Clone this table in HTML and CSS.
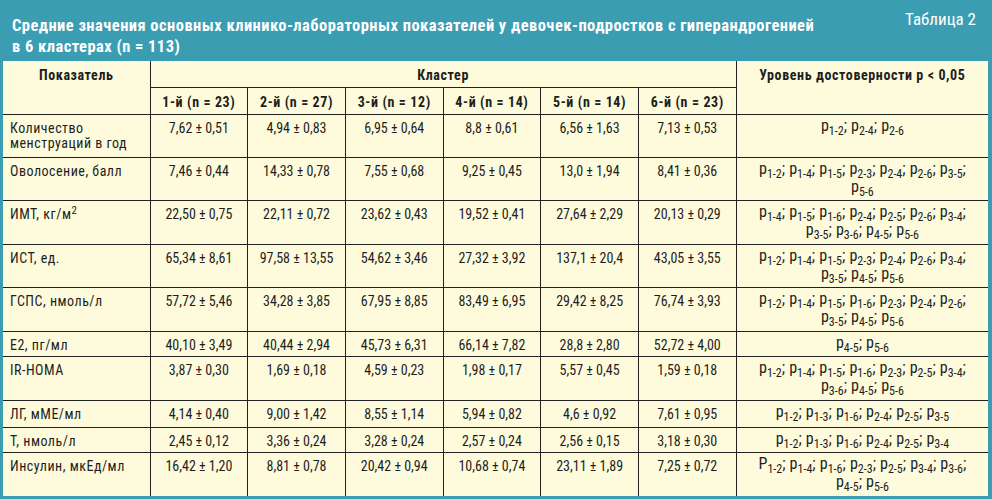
FILE: index.html
```html
<!DOCTYPE html>
<html lang="ru">
<head>
<meta charset="utf-8">
<title>Таблица 2</title>
<link rel="stylesheet" href="styles.css">
</head>
<body>
<div class="frame">
  <div class="title-bar">
    <h1 class="title">Средние значения основных клинико-лабораторных показателей у девочек-подростков с гиперандрогенией<br>в 6 кластерах (n = 113)</h1>
    <div class="label">Таблица 2</div>
  </div>
  <table class="data">
    <colgroup>
      <col class="col-name">
      <col class="col-val"><col class="col-val"><col class="col-val">
      <col class="col-val"><col class="col-val"><col class="col-val">
      <col class="col-p">
    </colgroup>
    <thead>
      <tr class="hr-a">
        <th rowspan="2" class="th-name">Показатель</th>
        <th colspan="6" class="th-cluster">Кластер</th>
        <th rowspan="2" class="th-p">Уровень достоверности р &lt; 0,05</th>
      </tr>
      <tr class="hr-b">
        <th>1-й (n = 23)</th>
        <th>2-й (n = 27)</th>
        <th>3-й (n = 12)</th>
        <th>4-й (n = 14)</th>
        <th>5-й (n = 14)</th>
        <th>6-й (n = 23)</th>
      </tr>
    </thead>
    <tbody>
      <tr class="r43">
        <td class="name">Количество<br>менструаций в год</td>
        <td>7,62 ± 0,51</td><td>4,94 ± 0,83</td><td>6,95 ± 0,64</td><td>8,8 ± 0,61</td><td>6,56 ± 1,63</td><td>7,13 ± 0,53</td>
        <td class="pv">р<sub>1-2</sub>; р<sub>2-4</sub>; р<sub>2-6</sub></td>
      </tr>
      <tr class="r43">
        <td class="name">Оволосение, балл</td>
        <td>7,46 ± 0,44</td><td>14,33 ± 0,78</td><td>7,55 ± 0,68</td><td>9,25 ± 0,45</td><td>13,0 ± 1,94</td><td>8,41 ± 0,36</td>
        <td class="pv">р<sub>1-2</sub>; р<sub>1-4</sub>; р<sub>1-5</sub>; р<sub>2-3</sub>; р<sub>2-4</sub>; р<sub>2-6</sub>; р<sub>3-5</sub>;<br>р<sub>5-6</sub></td>
      </tr>
      <tr class="r44">
        <td class="name">ИМТ, кг/м<sup>2</sup></td>
        <td>22,50 ± 0,75</td><td>22,11 ± 0,72</td><td>23,62 ± 0,43</td><td>19,52 ± 0,41</td><td>27,64 ± 2,29</td><td>20,13 ± 0,29</td>
        <td class="pv">р<sub>1-4</sub>; р<sub>1-5</sub>; р<sub>1-6</sub>; р<sub>2-4</sub>; р<sub>2-5</sub>; р<sub>2-6</sub>; р<sub>3-4</sub>;<br>р<sub>3-5</sub>; р<sub>3-6</sub>; р<sub>4-5</sub>; р<sub>5-6</sub></td>
      </tr>
      <tr class="r43">
        <td class="name">ИСТ, ед.</td>
        <td>65,34 ± 8,61</td><td>97,58 ± 13,55</td><td>54,62 ± 3,46</td><td>27,32 ± 3,92</td><td>137,1 ± 20,4</td><td>43,05 ± 3,55</td>
        <td class="pv">р<sub>1-2</sub>; р<sub>1-4</sub>; р<sub>1-5</sub>; р<sub>2-3</sub>; р<sub>2-4</sub>; р<sub>2-6</sub>; р<sub>3-4</sub>;<br>р<sub>3-5</sub>; р<sub>4-5</sub>; р<sub>5-6</sub></td>
      </tr>
      <tr class="r44">
        <td class="name">ГСПС, нмоль/л</td>
        <td>57,72 ± 5,46</td><td>34,28 ± 3,85</td><td>67,95 ± 8,85</td><td>83,49 ± 6,95</td><td>29,42 ± 8,25</td><td>76,74 ± 3,93</td>
        <td class="pv">р<sub>1-2</sub>; р<sub>1-4</sub>; р<sub>1-5</sub>; р<sub>1-6</sub>; р<sub>2-3</sub>; р<sub>2-4</sub>; р<sub>2-6</sub>;<br>р<sub>3-5</sub>; р<sub>4-5</sub>; р<sub>5-6</sub></td>
      </tr>
      <tr class="r25">
        <td class="name">Е2, пг/мл</td>
        <td>40,10 ± 3,49</td><td>40,44 ± 2,94</td><td>45,73 ± 6,31</td><td>66,14 ± 7,82</td><td>28,8 ± 2,80</td><td>52,72 ± 4,00</td>
        <td class="pv">р<sub>4-5</sub>; р<sub>5-6</sub></td>
      </tr>
      <tr class="r44">
        <td class="name">IR-HOMA</td>
        <td>3,87 ± 0,30</td><td>1,69 ± 0,18</td><td>4,59 ± 0,23</td><td>1,98 ± 0,17</td><td>5,57 ± 0,45</td><td>1,59 ± 0,18</td>
        <td class="pv">р<sub>1-2</sub>; р<sub>1-4</sub>; р<sub>1-5</sub>; р<sub>1-6</sub>; р<sub>2-3</sub>; р<sub>2-5</sub>; р<sub>3-4</sub>;<br>р<sub>3-6</sub>; р<sub>4-5</sub>; р<sub>5-6</sub></td>
      </tr>
      <tr class="r27">
        <td class="name">ЛГ, мМЕ/мл</td>
        <td>4,14 ± 0,40</td><td>9,00 ± 1,42</td><td>8,55 ± 1,14</td><td>5,94 ± 0,82</td><td>4,6 ± 0,92</td><td>7,61 ± 0,95</td>
        <td class="pv">р<sub>1-2</sub>; р<sub>1-3</sub>; р<sub>1-6</sub>; р<sub>2-4</sub>; р<sub>2-5</sub>; р<sub>3-5</sub></td>
      </tr>
      <tr class="r25">
        <td class="name">Т, нмоль/л</td>
        <td>2,45 ± 0,12</td><td>3,36 ± 0,24</td><td>3,28 ± 0,24</td><td>2,57 ± 0,24</td><td>2,56 ± 0,15</td><td>3,18 ± 0,30</td>
        <td class="pv">р<sub>1-2</sub>; р<sub>1-3</sub>; р<sub>1-6</sub>; р<sub>2-4</sub>; р<sub>2-5</sub>; р<sub>3-4</sub></td>
      </tr>
      <tr class="r44 last">
        <td class="name">Инсулин, мкЕд/мл</td>
        <td>16,42 ± 1,20</td><td>8,81 ± 0,78</td><td>20,42 ± 0,94</td><td>10,68 ± 0,74</td><td>23,11 ± 1,89</td><td>7,25 ± 0,72</td>
        <td class="pv">Р<sub>1-2</sub>; р<sub>1-4</sub>; р<sub>1-6</sub>; р<sub>2-3</sub>; р<sub>2-5</sub>; р<sub>3-4</sub>; р<sub>3-6</sub>;<br>р<sub>4-5</sub>; р<sub>5-6</sub></td>
      </tr>
    </tbody>
  </table>
</div>
</body>
</html>
```

FILE: styles.css
```css
* { box-sizing: border-box; }

html, body {
  margin: 0;
  padding: 0;
  background: #3a9db2;
}

body {
  font-family: "Liberation Sans Narrow", "Roboto Condensed", "DejaVu Sans Condensed", Roboto, sans-serif;
  color: #1e1e1e;
}

.frame {
  width: 992px;
  height: 499px;
  background: #3a9db2;
  padding: 0 4px 3px 3px;
  display: flex;
  flex-direction: column;
}

.title-bar {
  height: 62px;
  display: flex;
  justify-content: space-between;
  align-items: flex-start;
  padding: 15px 12px 0 9px;
  color: #ffffff;
}

.title {
  margin: 0;
  font-size: 16.5px;
  line-height: 21px;
  letter-spacing: 0.45px;
  font-weight: bold;
}

.label {
  font-size: 17px;
  line-height: 20px;
  margin-top: -6px;
}

.data {
  width: 985px;
  border-collapse: collapse;
  table-layout: fixed;
  background: #fdfbdc;
  font-size: 14px;
}

.col-name { width: 147px; }
.col-val { width: 97.7px; }
.col-p { width: 252px; }

.data th,
.data td {
  border: 1px solid #222222;
  vertical-align: top;
  text-align: center;
  padding: 6px 4px 0 4px;
  line-height: 15px;
}

.data tr > :first-child { border-left: none; }
.data tr > :last-child,
.data .th-p { border-right: none; }
.data thead tr:first-child > * { border-top: none; }
.data tr.last > * { border-bottom: none; }

.data th {
  font-weight: bold;
  letter-spacing: 0.6px;
  padding-top: 7px;
}

.hr-a { height: 26px; }
.hr-b { height: 27px; }
.r43 { height: 43px; }
.r44 { height: 44px; }
.r25 { height: 25px; }
.r27 { height: 27px; }

.data td.name {
  text-align: left;
  padding-left: 7px;
  letter-spacing: 0.5px;
}

.data td.pv {
  font-size: 16px;
  line-height: 18px;
  padding: 2px 2px 0 2px;
  word-spacing: 0.5px;
}

sub {
  font-size: 12px;
  vertical-align: -4px;
  line-height: 0;
}

sup {
  font-size: 11px;
  vertical-align: 5px;
  line-height: 0;
}
```
